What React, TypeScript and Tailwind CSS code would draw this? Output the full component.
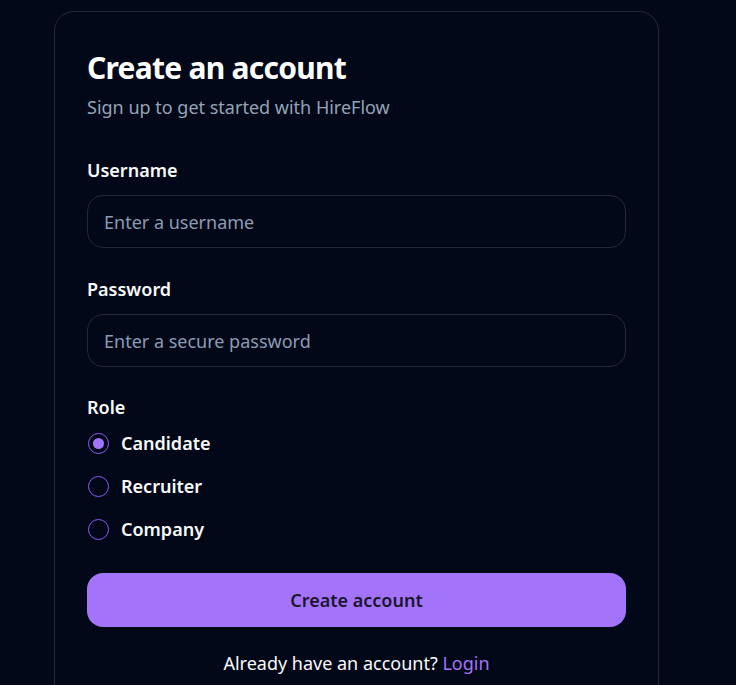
import { useState } from "react"

const roles = ["Candidate", "Recruiter", "Company"]

function RoleOption({
  label,
  checked,
  onSelect,
}: {
  label: string
  checked: boolean
  onSelect: () => void
}) {
  return (
    <label className="flex h-7 cursor-pointer items-center gap-3" onClick={onSelect}>
      <span className="ml-px flex h-[21px] w-[21px] items-center justify-center rounded-full border-[1.5px] border-[#8b5cf6]">
        {checked && <span className="h-[11px] w-[11px] rounded-full bg-[#a374f9]" />}
      </span>
      <span className="text-lg leading-7 font-semibold text-[#f8fafc]">{label}</span>
    </label>
  )
}

export default function App() {
  const [role, setRole] = useState("Candidate")

  return (
    <div
      className="min-h-[685px] w-full overflow-hidden bg-[#020817] pt-[11px]"
      style={{ fontFamily: '"Noto Sans", "Open Sans", sans-serif' }}
    >
      <div className="ml-[54px] w-[605px] rounded-[20px] border border-[#1e293b] px-8 pt-[36px] pb-8">
        {/* Header */}
        <h1 className="text-[30px] leading-10 font-bold tracking-tight text-white">Create an account</h1>
        <p className="mt-[5px] text-lg leading-7 text-[#94a3b8]">Sign up to get started with HireFlow</p>

        {/* Username */}
        <div className="mt-[35px]">
          <label className="block text-lg leading-7 font-semibold text-[#f8fafc]">Username</label>
          <input
            placeholder="Enter a username"
            className="mt-[11px] h-[53px] w-full rounded-2xl border border-[#1e293b] bg-transparent px-4 text-lg text-white outline-none placeholder:text-[#8b9bb4]"
          />
        </div>

        {/* Password */}
        <div className="mt-[27px]">
          <label className="block text-lg leading-7 font-semibold text-[#f8fafc]">Password</label>
          <input
            type="password"
            placeholder="Enter a secure password"
            className="mt-[11px] h-[53px] w-full rounded-2xl border border-[#1e293b] bg-transparent px-4 text-lg text-white outline-none placeholder:text-[#8b9bb4]"
          />
        </div>

        {/* Role */}
        <div className="mt-[26px]">
          <p className="text-lg leading-7 font-semibold text-[#f8fafc]">Role</p>
          <div className="mt-2 flex flex-col gap-[15px]">
            {roles.map((r) => (
              <RoleOption key={r} label={r} checked={role === r} onSelect={() => setRole(r)} />
            ))}
          </div>
        </div>

        <button className="mt-[30px] h-[54px] w-full rounded-2xl bg-[#a374f9] text-lg font-semibold text-[#1c1530]">
          Create account
        </button>

        <p className="mt-[22px] text-center text-lg leading-7 text-[#f8fafc]">
          Already have an account? <a className="text-[#a374f9]">Login</a>
        </p>
      </div>
    </div>
  )
}
